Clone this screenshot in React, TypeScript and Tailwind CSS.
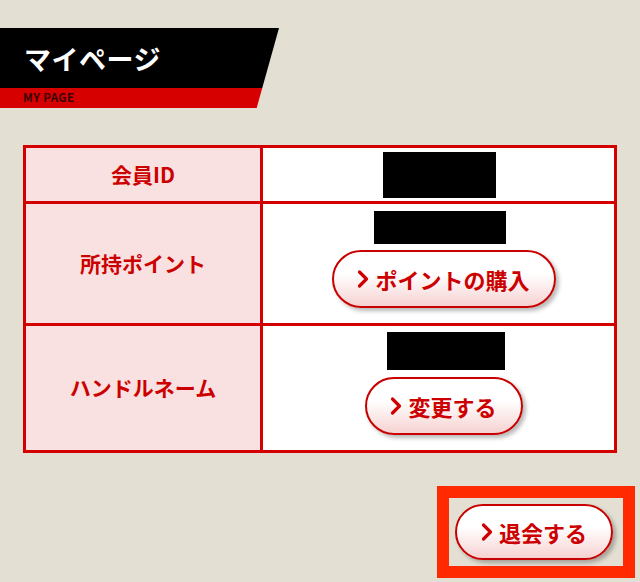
import React from 'react';

// ─── Shared pieces ───────────────────────────────────────────────────────────

const FONT = "font-['Noto_Sans_CJK_JP','Noto_Sans',sans-serif]";

function Chevron() {
  return (
    <svg width="12" height="20" viewBox="0 0 12 20" fill="none" className="shrink-0">
      <polyline
        points="2.5,3 9.5,10 2.5,17"
        stroke="#cc0000"
        strokeWidth="3.2"
        strokeLinecap="round"
        strokeLinejoin="round"
      />
    </svg>
  );
}

interface PillButtonProps {
  label: string;
  className: string;
}

function PillButton({ label, className }: PillButtonProps) {
  return (
    <button
      type="button"
      className={`flex items-center justify-center gap-[6px] rounded-full border-2 border-[#c80000] bg-gradient-to-b from-white from-40% to-[#f6d2d2] text-[22px] font-bold leading-none text-[#cc0000] shadow-[3px_3px_4px_rgba(0,0,0,0.28)] ${className}`}
    >
      <Chevron />
      <span>{label}</span>
    </button>
  );
}

function Redacted({ className }: { className: string }) {
  return <div className={`bg-black ${className}`} />;
}

// ─── Page ────────────────────────────────────────────────────────────────────

export default function App() {
  return (
    <div className={`h-[582px] w-[640px] overflow-hidden bg-[#e4dfd3] pt-[28px] ${FONT}`}>
      {/* Title band */}
      <div className="h-[80px] w-[279px] [clip-path:polygon(0_0,100%_0,92%_100%,0_100%)]">
        <div className="flex h-[60px] items-center bg-black pl-[24px]">
          <h1 className="text-[27px] font-bold leading-none tracking-[0.5px] text-white">マイページ</h1>
        </div>
        <div className="flex h-[20px] items-center bg-[#d60000] pl-[23px]">
          <span className="text-[11.5px] font-bold leading-none tracking-[0.4px] text-[#3a0000]">MY PAGE</span>
        </div>
      </div>

      {/* Member table */}
      <div className="mx-[23px] mt-[37px] grid grid-cols-[237px_1fr] border-[3px] border-[#d40000] text-[21px] font-bold text-[#cc0000]">
        <div className="flex h-[56px] items-center justify-center border-b-[3px] border-r-[3px] border-[#d40000] bg-[#f9e1e1]">
          会員ID
        </div>
        <div className="flex h-[56px] items-center justify-center border-b-[3px] border-[#d40000] bg-white pl-[2px]">
          <Redacted className="h-[46px] w-[113px]" />
        </div>

        <div className="flex h-[122px] items-center justify-center border-b-[3px] border-r-[3px] border-[#d40000] bg-[#f9e1e1]">
          所持ポイント
        </div>
        <div className="flex h-[122px] flex-col items-center border-b-[3px] border-[#d40000] bg-white pt-[7px]">
          <Redacted className="ml-[2px] h-[33px] w-[132px]" />
          <PillButton label="ポイントの購入" className="ml-[10px] mt-[6px] h-[58px] w-[224px]" />
        </div>

        <div className="flex h-[124px] items-center justify-center border-r-[3px] border-[#d40000] bg-[#f9e1e1]">
          ハンドルネーム
        </div>
        <div className="flex h-[124px] flex-col items-center bg-white pt-[6px]">
          <Redacted className="ml-[14px] h-[38px] w-[118px]" />
          <PillButton label="変更する" className="ml-[10px] mt-[7px] h-[58px] w-[158px]" />
        </div>
      </div>

      {/* Withdraw */}
      <div className="mt-[33px] flex justify-end pr-[5px]">
        <div className="flex h-[92px] w-[198px] items-center border-[12px] border-[#ff2a00] pl-[6px]">
          <PillButton label="退会する" className="h-[56px] w-[158px]" />
        </div>
      </div>
    </div>
  );
}
